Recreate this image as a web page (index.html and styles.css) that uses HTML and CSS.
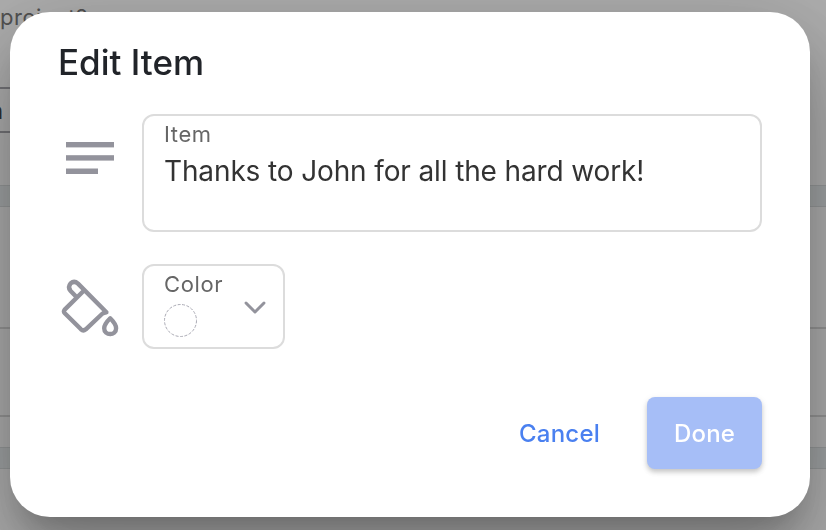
FILE: index.html
```html
<!DOCTYPE html>
<html lang="en">
<head>
    <meta charset="UTF-8">
    <meta name="viewport" content="width=device-width, initial-scale=1.0">
    <title>Edit Item</title>
    <link rel="stylesheet" href="styles.css">
</head>
<body>
    <!-- Page behind the dialog -->
    <div class="page">
        <p class="question">project?</p>
        <div class="answer">n</div>
        <div class="divider"></div>
        <div class="row row-first"></div>
        <div class="row row-middle"></div>
        <div class="row row-last"></div>
        <div class="divider"></div>
    </div>

    <div class="overlay">
        <div class="dialog">
            <h2 class="title">Edit Item</h2>

            <div class="form-row">
                <svg class="icon" width="64" height="88" viewBox="0 0 64 88" fill="#93939c">
                    <rect x="8" y="28" width="48" height="5.4"/>
                    <rect x="8" y="41.2" width="48" height="5.4"/>
                    <rect x="8" y="54.5" width="32" height="5.5"/>
                </svg>
                <div class="field item-field">
                    <span class="label">Item</span>
                    <span class="value">Thanks to John for all the hard work!</span>
                </div>
            </div>

            <div class="form-row">
                <svg class="icon" width="64" height="84" viewBox="8 -1 64 84" fill="none" stroke="#93939c" stroke-width="4.4" stroke-linecap="round" stroke-linejoin="round">
                    <path d="M33 26.5 L14.7 44.6 Q13.2 46.5 14.8 48.2 L31 64.3 Q33.3 66.4 35.8 64.3 L52 49 Q53.5 47.6 56.4 47.2 L28 18.6 Q24.2 15.2 20.6 18.4 Q17.5 22 20.4 25.7 L26.5 32"/>
                    <path d="M60.2 53.3 Q54.2 59.2 54.2 63.2 C54.2 71 66.1 71 66.1 63.2 Q66.1 59.2 60.2 53.3 Z"/>
                </svg>
                <div class="field color-field">
                    <div>
                        <span class="label">Color</span>
                        <svg class="swatch" width="34" height="34" viewBox="0 0 34 34" fill="none" stroke="#aaaab4">
                            <circle cx="16.5" cy="16.5" r="16" stroke-dasharray="3 1.5"/>
                        </svg>
                    </div>
                    <svg class="chevron" width="24" height="16" viewBox="0 0 24 16" fill="none" stroke="#93939c" stroke-width="3" stroke-linecap="round" stroke-linejoin="round">
                        <path d="M3 3 L12 12 L21 3"/>
                    </svg>
                </div>
            </div>

            <div class="actions">
                <button class="btn cancel">Cancel</button>
                <button class="btn done">Done</button>
            </div>
        </div>
    </div>
</body>
</html>
```

FILE: styles.css
```css
* {
    box-sizing: border-box;
}

body {
    margin: 0;
    height: 530px;
    overflow: hidden;
    font-family: Inter, "Liberation Sans", sans-serif;
    background-color: #fff;
}

.page {
    display: flex;
    flex-direction: column;
    height: 530px;
}

.question {
    margin: 0;
    height: 87px;
    padding-top: 3px;
    font-size: 22px;
    line-height: 28px;
    letter-spacing: 0.5px;
    color: #777;
}

.answer {
    width: 400px;
    height: 46px;
    margin-bottom: 52px;
    border: 2px solid #aaaab0;
    border-width: 2px 0;
    font-size: 24px;
    line-height: 44px;
    text-indent: -11px;
    color: #444;
}

.divider {
    flex: none;
    height: 22px;
    background-color: #ebf0f1;
    border: 1px solid #dbdfe0;
    border-width: 1px 0;
}

.row {
    border-bottom: 2px solid #dadada;
}

.row-first {
    height: 122px;
}

.row-middle {
    height: 88px;
}

.row-last {
    height: 30px;
    border: none;
}

.overlay {
    position: fixed;
    top: 0;
    left: 0;
    width: 100%;
    height: 100%;
    display: flex;
    justify-content: center;
    padding: 12px 16px 13px 10px;
    background-color: rgba(0, 0, 0, 0.32);
}

.dialog {
    width: 800px;
    height: 505px;
    padding: 26px 48px 28px;
    border-radius: 40px;
    background-color: #fff;
    box-shadow: 0 22px 30px -14px rgba(0, 0, 0, 0.2),
                0 48px 76px 6px rgba(0, 0, 0, 0.17),
                0 18px 92px 16px rgba(0, 0, 0, 0.14);
}

.title {
    margin: 0 0 28px;
    font-size: 35px;
    line-height: 48px;
    font-weight: 500;
    letter-spacing: 0;
    color: #212429;
}

.form-row {
    display: flex;
    gap: 20px;
    margin-bottom: 32px;
}

.icon {
    flex: none;
}

.field {
    border: 2px solid #dcdcdc;
    border-radius: 12px;
    padding: 5px 20px;
}

.item-field {
    flex: 1;
    height: 118px;
}

.label {
    display: block;
    font-size: 22px;
    line-height: 26px;
    letter-spacing: 0.6px;
    color: #666;
}

.value {
    display: block;
    margin-top: 6px;
    font-size: 28px;
    line-height: 36px;
    letter-spacing: -0.13px;
    white-space: nowrap;
    color: #333;
}

.color-field {
    display: flex;
    justify-content: space-between;
    align-items: flex-start;
    width: 143px;
    height: 85px;
    padding: 5px 16px 5px 20px;
}

.swatch {
    display: block;
    margin-top: 7px;
}

.chevron {
    margin-top: 29px;
}

.actions {
    display: flex;
    justify-content: flex-end;
    gap: 20px;
    padding-top: 16px;
}

.btn {
    height: 72px;
    border: none;
    border-radius: 8px;
    font-family: inherit;
    font-size: 24px;
    font-weight: 500;
    letter-spacing: 0.2px;
}

.cancel {
    width: 135px;
    background: none;
    color: #4a80f0;
}

.done {
    width: 115px;
    background-color: #a6bef7;
    color: #fff;
    box-shadow: 0 3px 5px rgba(0, 0, 0, 0.2), 0 2px 10px rgba(0, 0, 0, 0.05);
}
```
